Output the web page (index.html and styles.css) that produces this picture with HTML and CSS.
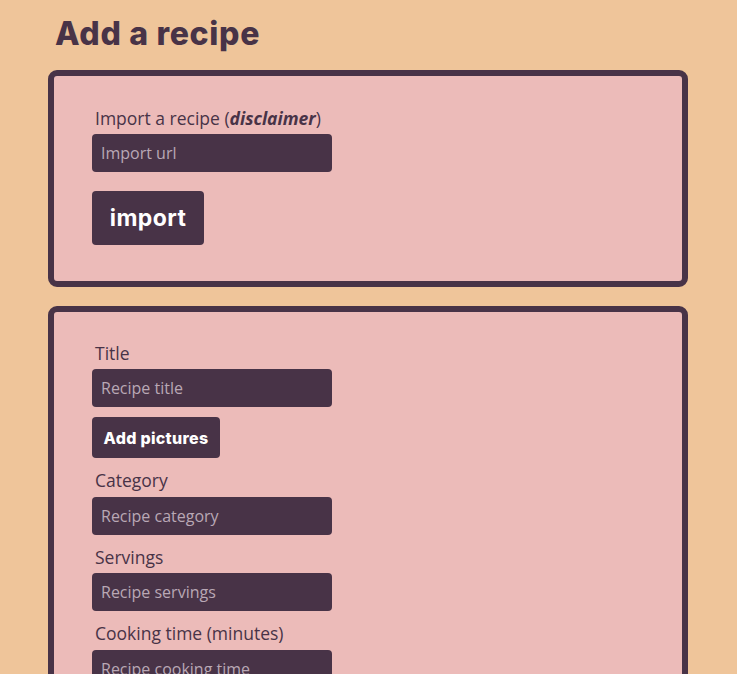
FILE: index.html
```html
<!DOCTYPE html>
<html lang="en">
<head>
<meta charset="utf-8">
<title>Add a recipe</title>
<link rel="stylesheet" href="styles.css">
</head>
<body>
<main class="page">
  <h1 class="page-title">Add a recipe</h1>

  <section class="card card-import">
    <div class="field">
      <label class="field-label" for="import-url">Import a recipe (<em class="disclaimer">disclaimer</em>)</label>
      <input class="text-input" id="import-url" type="text" placeholder="Import url">
    </div>
    <button class="btn btn-import" type="button">import</button>
  </section>

  <section class="card card-form">
    <div class="field">
      <label class="field-label" for="title">Title</label>
      <input class="text-input" id="title" type="text" placeholder="Recipe title">
    </div>
    <button class="btn btn-pictures" type="button">Add pictures</button>
    <div class="field">
      <label class="field-label" for="category">Category</label>
      <input class="text-input" id="category" type="text" placeholder="Recipe category">
    </div>
    <div class="field">
      <label class="field-label" for="servings">Servings</label>
      <input class="text-input" id="servings" type="text" placeholder="Recipe servings">
    </div>
    <div class="field">
      <label class="field-label" for="cooking">Cooking time (minutes)</label>
      <input class="text-input" id="cooking" type="text" placeholder="Recipe cooking time">
    </div>
    <div class="field">
      <label class="field-label" for="prep">Preparation time (minutes)</label>
      <input class="text-input" id="prep" type="text" placeholder="Recipe preparation time">
    </div>
  </section>
</main>
</body>
</html>
```

FILE: styles.css
```css
* { box-sizing: border-box; }

body {
  margin: 0;
  background: #efc59a;
  color: #483347;
  font-family: "Open Sans", "Noto Sans", sans-serif;
}

.page {
  width: 641px;
  margin: 0 auto;
}

.page-title {
  margin: 0 0 16px;
  padding: 14px 0 0 7px;
  font-family: Inter, "Open Sans", sans-serif;
  font-weight: 800;
  font-size: 32px;
  line-height: 40px;
  letter-spacing: 0.7px;
  color: #483347;
}

.card {
  display: flex;
  flex-direction: column;
  align-items: flex-start;
  width: 640px;
  background: #ecbbb9;
  border: 6px solid #483347;
  border-radius: 9px;
  padding: 19.5px 38px 36px;
  margin-bottom: 19px;
}

.card-form {
  padding-top: 18.5px;
}

.field {
  display: flex;
  flex-direction: column;
  align-items: flex-start;
}

.field-label {
  padding: 10px 0 4.5px 3px;
  font-size: 17.5px;
  font-weight: 500;
  line-height: 24px;
  color: #483347;
}

.disclaimer {
  font-weight: 700;
}

.text-input {
  width: 240px;
  height: 38px;
  border: none;
  border-radius: 4px;
  background: #483347;
  padding: 0 9px;
  font-family: "Open Sans", "Noto Sans", sans-serif;
  font-size: 16px;
  color: #f3e6ee;
}

.text-input::placeholder {
  color: #b9a8b5;
}

.btn {
  border: none;
  border-radius: 4px;
  background: #483347;
  color: #ffffff;
  font-family: Inter, "Open Sans", sans-serif;
}

.btn-import {
  margin-top: 19px;
  width: 112px;
  height: 54px;
  font-size: 23px;
  font-weight: 700;
  letter-spacing: 0.4px;
}

.btn-pictures {
  margin-top: 10px;
  width: 128px;
  height: 41px;
  font-size: 16px;
  font-weight: 800;
  letter-spacing: 0.3px;
}
```
